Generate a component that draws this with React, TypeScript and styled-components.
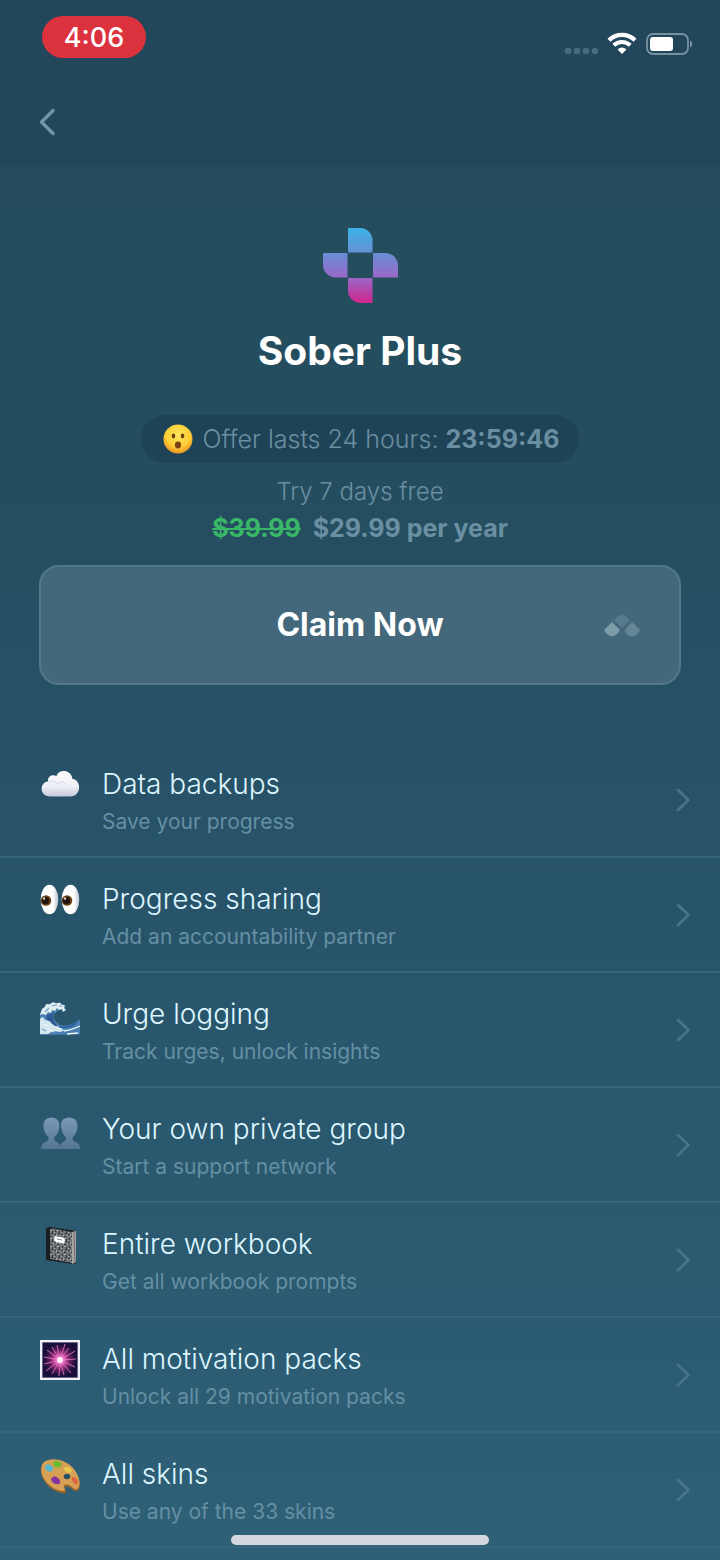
import styled, { createGlobalStyle } from 'styled-components'

const GlobalStyle = createGlobalStyle`
  * {
    box-sizing: border-box;
  }
  body {
    margin: 0;
    background: #2e6077;
    font-family: Inter, "Liberation Sans", sans-serif;
  }
`

const Page = styled.div`
  min-height: 100vh;
  padding-bottom: 11px;
  background: linear-gradient(180deg, #244b5c 0%, #244e5f 30%, #275268 52%, #2e6077 100%);
`

const Header = styled.header`
  padding-bottom: 20px;
  background: #22475a;
`

const StatusBar = styled.div`
  display: flex;
  justify-content: space-between;
  align-items: flex-start;
  padding: 16px 27px 0 42px;
`

const Clock = styled.time`
  width: 104px;
  padding-top: 2px;
  border-radius: 21px;
  background: #db323e;
  color: #fff;
  font-size: 27px;
  font-weight: 500;
  line-height: 40px;
  text-align: center;
`

const Indicators = styled.div`
  display: flex;
  align-items: center;
  gap: 9px;
  padding-top: 16px;
`

const SignalBox = styled.div`
  display: flex;
  padding-top: 14px;
`

const BackButton = styled.button`
  display: block;
  margin-top: 40px;
  padding: 10px 39px;
  border: 0;
  background: none;
  color: #6e95aa;
  cursor: pointer;

  svg {
    display: block;
  }
`

const Hero = styled.section`
  display: flex;
  flex-direction: column;
  align-items: center;
  padding: 62px 39px 58px;
`

const Title = styled.h1`
  margin: 24px 0 40px;
  color: #fff;
  font-size: 39px;
  font-weight: 700;
  line-height: 48px;
`

const OfferPill = styled.div`
  display: flex;
  align-items: center;
  gap: 10px;
  margin-bottom: 11px;
  padding: 0 20px 0 22px;
  border-radius: 24px;
  background: #1f4356;
  color: #6b8fa2;
  font-size: 25px;
  font-weight: 300;
  line-height: 48px;

  strong {
    font-weight: 700;
  }
`

const PriceLine = styled.p<{ $bold?: boolean }>`
  margin: 0;
  color: #6b8fa2;
  font-size: ${({ $bold }) => ($bold ? 25 : 24)}px;
  font-weight: ${({ $bold }) => ($bold ? 700 : 300)};
  line-height: 36px;

  del {
    margin-right: 12px;
    color: #38b866;
  }
`

const ClaimButton = styled.button`
  display: grid;
  grid-template-columns: 1fr auto 1fr;
  align-items: center;
  width: 100%;
  margin-top: 19px;
  padding: 0 38px;
  border: 2px solid #52778a;
  border-radius: 20px;
  background: #44687b;
  color: #fff;
  font-family: inherit;
  font-size: 32px;
  font-weight: 700;
  line-height: 116px;
  cursor: pointer;

  span {
    grid-column: 2;
  }
  svg {
    justify-self: end;
  }
`

const FeatureList = styled.ul`
  margin: 0;
  padding: 0;
  list-style: none;
`

const FeatureRow = styled.a`
  display: flex;
  align-items: center;
  padding: 0 29px 0 40px;
  border-bottom: 2px solid #37667c;
  color: inherit;
  text-decoration: none;
`

const FeatureIcon = styled.div`
  align-self: flex-start;
  width: 40px;
  margin: 22px 22px 0 0;

  svg {
    display: block;
  }
`

const FeatureText = styled.div`
  flex: 1;
  padding: 22px 0 15px;
  line-height: 38px;
`

const FeatureName = styled.div`
  color: #def6ff;
  font-size: 28px;
  font-weight: 300;
`

const FeatureNote = styled.div`
  color: #658fa3;
  font-size: 21px;
  font-weight: 400;
`

const HomeIndicator = styled.div`
  position: fixed;
  bottom: 15px;
  left: 50%;
  width: 258px;
  height: 10px;
  margin-left: -129px;
  border-radius: 5px;
  background: #d5d7de;
`

const Signal = () => (
  <svg width="34" height="8" viewBox="0 0 34 8" fill="#486b7d">
    <circle cx="4" cy="4" r="3.3" />
    <circle cx="13" cy="4" r="3.3" />
    <circle cx="22" cy="4" r="3.3" />
    <circle cx="31" cy="4" r="3.3" />
  </svg>
)

const Wifi = () => (
  <svg width="30" height="23" viewBox="0 0 30 23" fill="none" stroke="#fff">
    <path d="M2 8.2a18.6 18.6 0 0 1 26 0" strokeWidth="4.2" />
    <path d="M6.8 13.3a11.7 11.7 0 0 1 16.4 0" strokeWidth="4" />
    <path d="M10.6 17.4a6.3 6.3 0 0 1 8.8 0L15 22z" fill="#fff" stroke="none" />
  </svg>
)

const Battery = () => (
  <svg width="47" height="22" viewBox="0 0 47 22" fill="none">
    <rect x="1" y="1" width="41" height="20" rx="6" stroke="#7891a0" strokeWidth="1.8" />
    <rect x="4" y="4" width="23" height="14" rx="3" fill="#fff" />
    <path d="M44 7.5c3 1 3 6 0 7z" fill="#7891a0" />
  </svg>
)

const BackIcon = () => (
  <svg width="16" height="28" viewBox="0 0 16 28" fill="none" stroke="currentColor" strokeWidth="3.4" strokeLinecap="round" strokeLinejoin="round">
    <path d="M14 2.5 2.5 14 14 25.5" />
  </svg>
)

const Chevron = () => (
  <svg width="16" height="26" viewBox="0 0 16 26" fill="none" stroke="#47748a" strokeWidth="2.8" strokeLinecap="round" strokeLinejoin="round">
    <path d="m3 3 10.5 10L3 23" />
  </svg>
)

const PlusLogo = () => (
  <svg width="75" height="75" viewBox="0 0 75 75">
    <defs>
      <linearGradient id="plus" x1="0" y1="0" x2="0" y2="75" gradientUnits="userSpaceOnUse">
        <stop offset="0" stopColor="#3ab3e8" />
        <stop offset="0.33" stopColor="#688fd5" />
        <stop offset="0.66" stopColor="#9868c8" />
        <stop offset="1" stopColor="#d0258d" />
      </linearGradient>
    </defs>
    <g fill="url(#plus)">
      <path d="M25 0h12.5A12.5 12.5 0 0 1 49.500 12.500V24.500H25z" />
      <path d="M50 25h12.5A12.5 12.5 0 0 1 75 37.500V49.500H50z" />
      <path d="M25 50h24.5v25H37.5A12.5 12.5 0 0 1 25 62.500z" />
      <path d="M0 25h24.5v24.5H12.5A12.5 12.5 0 0 1 0 37z" />
    </g>
  </svg>
)

const Dots = () => (
  <svg width="38" height="24" viewBox="0 0 38 24">
    <path d="M9 9 17 17l-2.500 3.500Q9 26 3.500 20.500L1 17z" fill="#7d9caa" />
    <path d="m11 8 3-4q5-5 10 0l3 4-8 7z" fill="#577b8d" />
    <path d="m29 9 7 7q2 2-1.500 5-5.500 4.500-11 0L21.500 17z" fill="#648697" />
  </svg>
)

const WowFace = () => (
  <svg width="30" height="30" viewBox="0 0 30 30">
    <defs>
      <radialGradient id="face" cx="0.5" cy="0.35" r="0.65">
        <stop offset="0" stopColor="#ffe65a" />
        <stop offset="0.65" stopColor="#fdcd36" />
        <stop offset="1" stopColor="#ee9422" />
      </radialGradient>
    </defs>
    <circle cx="15" cy="15" r="14.5" fill="url(#face)" />
    <ellipse cx="10.5" cy="12" rx="1.8" ry="2.4" fill="#6b4511" />
    <ellipse cx="19.500" cy="12" rx="1.8" ry="2.4" fill="#6b4511" />
    <ellipse cx="15" cy="21" rx="3.1" ry="3.4" fill="#7c4414" />
  </svg>
)

const Cloud = () => (
  <svg width="40" height="40" viewBox="0 0 40 40">
    <defs>
      <linearGradient id="cloud" x1="0" y1="0" x2="0" y2="1">
        <stop offset="0" stopColor="#fff" />
        <stop offset="0.6" stopColor="#eeeff7" />
        <stop offset="1" stopColor="#c5cbdc" />
      </linearGradient>
    </defs>
    <path d="M10 31.500C-1 31.500-.5 17 8 16.500c-.5-6 5-7.500 8.500-5.500C18.500 4 31 4 32.500 14c9 .5 9.500 17.500-2.500 17.500z" fill="url(#cloud)" />
    <path d="M8 17c4-2 8-1 9 2 3-2.500 7-2.500 9-.5" stroke="#dde0ec" fill="none" strokeWidth="1.2" />
  </svg>
)

const Eyes = () => (
  <svg width="40" height="40" viewBox="0 0 40 40">
    <defs>
      <linearGradient id="eye" x1="0" x2="1" y1="0" y2="0">
        <stop offset="0.7" stopColor="#fff" />
        <stop offset="1" stopColor="#b9c6d2" />
      </linearGradient>
    </defs>
    {[9.5, 30.5].map((cx) => (
      <g key={cx}>
        <ellipse cx={cx} cy="19.5" rx="8.8" ry="14.8" fill="url(#eye)" />
        <circle cx={cx - 3.5} cy="20.5" r="5.3" fill="#6e4518" />
        <circle cx={cx - 4} cy="20.5" r="3.7" fill="#23150e" />
        <circle cx={cx - 5.5} cy="18.5" r="1.2" fill="#e7d4b5" />
      </g>
    ))}
  </svg>
)

const Wave = () => (
  <svg width="40" height="40" viewBox="0 0 40 40">
    <path d="M0 40V19c2-7 7-11 14-11.500l8 1 3 4-1 3-4-1-4 3c-4 3-3 7 2 11 7 5 15 0 22-4v15z" fill="#4a7fb2" />
    <path d="M0 20 2 14l3-2 1-3 4 .5L13 7l3 1.500 4-1 1 2 4 1-1 2.500 2 2-3 2-1-3-3 1-2-2-2 3-3-1-1 3-3-1-2 3-3-1z" fill="#e0eef0" />
    <path d="M0 24q3-4 5 1l5 1 2 3 5 1 3 4 6 1-6 2-7-1-5 3H0z" fill="#d5e7ee" />
    <path d="M20 31q9 2 20-7l-7 8-13 2z" fill="#2e64a1" />
    <path d="M7 20q-2 5 4 7 3 5 7 4-6-5-5-11l2-3z" fill="#2a5994" />
    <path d="M24 36q7-1 16-5M16 33l6 1M3 29l5 2M9 34l5 3M27 39l11-1" stroke="#e5f4f9" strokeWidth="1.3" fill="none" />
    <path d="M2 34l4 2M5 17l4-4M12 11l5-1M19 11h3" stroke="#6c9cc2" strokeWidth="1.2" />
  </svg>
)

const People = () => (
  <svg width="40" height="40" viewBox="0 0 40 40">
    <defs>
      <linearGradient id="people" x1="0" x2="0" y1="4" y2="40" gradientUnits="userSpaceOnUse">
        <stop offset="0" stopColor="#7e9dba" />
        <stop offset="1" stopColor="#537491" />
      </linearGradient>
    </defs>
    <g fill="url(#people)">
      <path d="M11.5 7.500C6 7.500 3 11 3.500 17c.5 5 2.500 8.500 5 10 .2 3-.5 4-3 5Q1 33.500 1 39h20q0-5.500-4.500-7c-2-1-2.500-2-2.300-5 2.800-1.500 4.800-5 5.200-10 .5-6-2.500-9.500-7.900-9.500z" />
      <path d="M29 7.500c-5.500 0-8.500 3.500-8 9.500.5 5 2.500 8.500 5 10 .2 3-.5 4-3 5Q21 33 20 39h20q0-5.500-4.500-7c-2.500-1-3-2-2.800-5 2.500-1.500 4.300-5 4.700-10 .5-6-2.500-9.500-8.400-9.500z" />
    </g>
  </svg>
)

const Notebook = () => (
  <svg width="40" height="40" viewBox="0 0 40 40">
    <defs>
      <pattern id="marble" width="7" height="8" patternUnits="userSpaceOnUse">
        <path d="M0 0h7v8H0z" fill="#707375" />
        <path d="M0 1h2v1H0zM4 0h2v1H4zM3 3h2v1H3zM1 5h1v2H1zM5 6h1v2H5z" fill="#36393b" />
        <path d="M2 1h1v2H2zM6 2h1v1H6zM3 5h2v1H3zM0 7h1v1H0z" fill="#a3a6a8" />
      </pattern>
    </defs>
    <path d="m6 3 4-1 26 4v32l-3 1-27-4z" fill="#191e21" />
    <path d="m10 3 22 4v31L10 34z" fill="url(#marble)" />
    <path d="m32 7 4-1v31l-4 2z" fill="#aaa7a1" />
    <path d="m34 7 1 30" stroke="#686a6a" />
    <path d="m15 11 8 1.500q2 1 2 3l-1 3-8-1.500q-2-1-2-3z" fill="#fff" />
    <path d="m17 14 5 1" stroke="#8b8b8c" />
  </svg>
)

const Sparkler = () => (
  <svg width="40" height="40" viewBox="0 0 40 40">
    <defs>
      <radialGradient id="glow">
        <stop offset="0" stopColor="#fff" />
        <stop offset="0.2" stopColor="#ff86d5" />
        <stop offset="0.5" stopColor="#bd318f" stopOpacity="0.7" />
        <stop offset="1" stopColor="#40194d" stopOpacity="0" />
      </radialGradient>
    </defs>
    <rect x="1.2" y="1.2" width="37.6" height="37.6" fill="#170f37" stroke="#edf0f8" strokeWidth="2.4" />
    <circle cx="20" cy="20" r="17" fill="url(#glow)" />
    <path d="m20 20-3-15M20 20 25 4M20 20l9-12M20 20l15-9M20 20l16-1M20 20l15 7M20 20l11 13M20 20l4 15M20 20l-1 16M20 20l-8 14M20 20 6 31M20 20 4 24M20 20 4 17M20 20 7 10M20 20 12 7" stroke="#df73be" strokeWidth="0.9" />
    <circle cx="20" cy="20" r="3" fill="#fff0fb" />
  </svg>
)

const Palette = () => (
  <svg width="40" height="40" viewBox="0 0 40 40">
    <g transform="translate(0 1)">
      <path d="M4 7C12 1 29 5 36 17c5 8 5 16 1 18-3 1-5-3-8-4-4-2-6 1-3 4 1 3-3 3-8 1C4 31-4 14 4 7z" fill="#9e642d" />
      <path d="M4 6C12 0 29 4 36 16c5 8 4 15 1 17-3 1-5-3-8-4-4-2-7 1-4 4 0 3-3 2-7 1C4 29-3 13 4 6z" fill="#d6a155" />
      <ellipse cx="27" cy="20.5" rx="3.2" ry="2.8" fill="#285065" />
      <path d="M5 11q1-4 5-2 4 2 3 5-3 3-7 0z" fill="#50b9d1" />
      <path d="M13 7q3-4 6-1 4 1 2 4-3 3-7 0z" fill="#68bd2d" />
      <path d="M24 12q3-3 7 1 2 4-2 4-5-1-5-5z" fill="#e9c94a" />
      <path d="M32 21q5 0 6 5-1 5-4 1-3-3-2-6z" fill="#dc6340" />
      <path d="M11 23q3-5 7-1 4 4 1 6-7 1-8-5z" fill="#84339c" />
    </g>
  </svg>
)

const features = [
  { id: 'backups', icon: <Cloud />, name: 'Data backups', note: 'Save your progress' },
  { id: 'sharing', icon: <Eyes />, name: 'Progress sharing', note: 'Add an accountability partner' },
  { id: 'urges', icon: <Wave />, name: 'Urge logging', note: 'Track urges, unlock insights' },
  { id: 'group', icon: <People />, name: 'Your own private group', note: 'Start a support network' },
  { id: 'workbook', icon: <Notebook />, name: 'Entire workbook', note: 'Get all workbook prompts' },
  { id: 'motivation', icon: <Sparkler />, name: 'All motivation packs', note: 'Unlock all 29 motivation packs' },
  { id: 'skins', icon: <Palette />, name: 'All skins', note: 'Use any of the 33 skins' },
]

const App: React.FC = () => {
  return (
    <Page>
      <GlobalStyle />
      <Header>
        <StatusBar>
          <Clock>4:06</Clock>
          <Indicators>
            <SignalBox><Signal /></SignalBox>
            <Wifi />
            <Battery />
          </Indicators>
        </StatusBar>
        <BackButton aria-label="Back">
          <BackIcon />
        </BackButton>
      </Header>
      <main>
        <Hero>
          <PlusLogo />
          <Title>Sober Plus</Title>
          <OfferPill>
            <WowFace />
            <span>Offer lasts 24 hours: <strong>23:59:46</strong></span>
          </OfferPill>
          <PriceLine>Try 7 days free</PriceLine>
          <PriceLine $bold><del>$39.99</del>$29.99 per year</PriceLine>
          <ClaimButton>
            <span>Claim Now</span>
            <Dots />
          </ClaimButton>
        </Hero>
        <FeatureList>
          {features.map(({ id, icon, name, note }) => (
            <li key={id}>
              <FeatureRow href={`#${id}`}>
                <FeatureIcon>{icon}</FeatureIcon>
                <FeatureText>
                  <FeatureName>{name}</FeatureName>
                  <FeatureNote>{note}</FeatureNote>
                </FeatureText>
                <Chevron />
              </FeatureRow>
            </li>
          ))}
        </FeatureList>
      </main>
      <HomeIndicator />
    </Page>
  )
}

export default App
